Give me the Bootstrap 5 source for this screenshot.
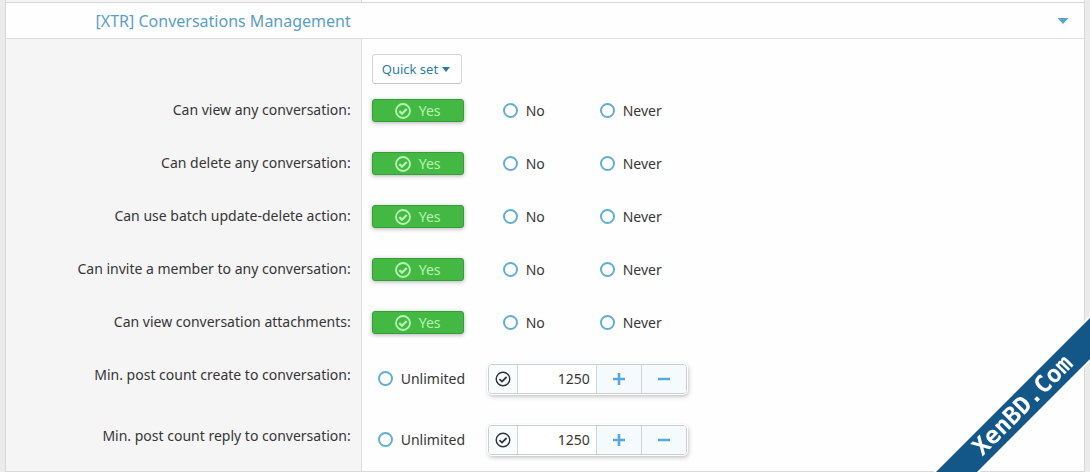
<!DOCTYPE html>
<html lang="en">
<head>
<meta charset="utf-8">
<meta name="viewport" content="width=device-width, initial-scale=1">
<title>Conversations Management permissions</title>
<link href="https://cdn.jsdelivr.net/npm/bootstrap@5.3.0/dist/css/bootstrap.min.css" rel="stylesheet">
<style>
  body { background: #ebebeb; color: #363636; font: 14px/20px "Noto Sans", sans-serif; overflow-x: hidden; }
  .panel { background: #fefefe; border: 1px solid #d8d8d8; border-top: 0; margin: 0 5px; }
  .prev-row { height: 2px; }
  .term { flex: 0 0 33%; background: #f5f5f5; border-right: 1px solid #dedede; padding-right: 10px; text-align: right; }
  .desc { padding-left: 10px; }
  .section-head { border-top: 1px solid #d8d8d8; border-bottom: 1px solid #dfdfdf; height: 37px; }
  .section-title { flex: 0 0 33%; padding-right: 11px; text-align: right; color: #5a9fc2; font-size: 16px; line-height: 24px; margin: 0; font-weight: 400; }
  .toggle-btn { width: 22px; height: 22px; margin-right: 10px; }
  .row-quick { height: 45px; }
  .row-choice { height: 53px; }
  .row-count { height: 61px; }
  .row-choice .term, .row-count .term { padding-top: 16px; }
  .row-count .desc { padding-bottom: 2px; }
  .btn-quick { --bs-btn-color: #2f7ca3; --bs-btn-bg: #fff; --bs-btn-border-color: #d3d6d8; --bs-btn-hover-color: #2f7ca3; --bs-btn-hover-bg: #f4fafd; --bs-btn-hover-border-color: #d3d6d8;
    width: 90px; height: 30px; padding: 0 9px; font-size: 13px; line-height: 20px; border-radius: 3px; border-bottom-color: #c2c5c7; }
  .choices { gap: 5px; }
  .choice { width: 92px; height: 23px; }
  .choice-plain { padding-left: 34px; }
  .choice-yes { padding-left: 22px; background: #43b943; border: 1px solid #369d39; border-radius: 3px; color: #b5f5b0; box-shadow: 0 1px 4px #0000004d; }
  .dot { appearance: none; flex: none; width: 15px; height: 15px; margin: 0; border: 2px solid #62aed0; border-radius: 50%; background: #fff; }
  .tick { appearance: none; flex: none; width: 16px; height: 16px; margin: 0; background: center / 16px 16px no-repeat; }
  .tick-light { background-image: url("data:image/svg+xml,%3Csvg xmlns='http://www.w3.org/2000/svg' viewBox='0 0 16 16' fill='none' stroke='%23b5f5b0'%3E%3Ccircle cx='8' cy='8' r='7' stroke-width='1.8'/%3E%3Cpath d='M4.3 8.2 7 10.7 11.7 6' stroke-width='2.3'/%3E%3C/svg%3E"); }
  .tick-dark { background-image: url("data:image/svg+xml,%3Csvg xmlns='http://www.w3.org/2000/svg' viewBox='0 0 16 16' fill='none' stroke='%23303438'%3E%3Ccircle cx='8' cy='8' r='6.8' stroke-width='1.4'/%3E%3Cpath d='M4.5 8.2 7 10.6 11.6 6' stroke-width='1.8'/%3E%3C/svg%3E"); }
  .unlimited { width: 116px; padding-left: 6px; }
  .stepper { width: 199px; height: 30px; border: 1px solid #c9ced0; border-radius: 4px; background: #fff; box-shadow: 0 0 0 1px #fff, 1px 2px 5px #0000004d; }
  .stepper-pick { width: 28px; background: #f8fcfd; }
  .stepper-value { width: 80px; border: 0; border-left: 1px solid #d0d5d6; border-right: 1px solid #d0d5d6; padding: 0 6px; text-align: right; color: #363636; font-size: 14px; background: #fff; }
  .stepper-btn { border: 0; padding: 0; background: #f5fbfd; }
  .stepper-btn + .stepper-btn { border-left: 1px solid #d0d5d6; }
  .ribbon-corner { position: fixed; right: 0; bottom: 0; width: 180px; height: 180px; overflow: hidden; pointer-events: none; }
  .ribbon { position: absolute; right: -53px; bottom: 52px; width: 240px; height: 29px; transform: rotate(-45deg); background: #135688; box-shadow: 0 0 0 2px #fff; color: #fff; text-align: center; font: bold 24px/29px "DejaVu Sans Mono", monospace; }
</style>
</head>
<body>
<main class="panel">
  <div class="prev-row d-flex"><div class="term"></div></div>
  <header class="section-head d-flex align-items-center">
    <h2 class="section-title">[XTR] Conversations Management</h2>
    <button type="button" class="toggle-btn btn p-0 border-0 ms-auto d-flex align-items-center justify-content-center" aria-label="Collapse section">
      <svg width="12" height="6" viewBox="0 0 12 6" aria-hidden="true"><path d="M.5 0h11L6 6z" fill="#5aa5cc"/></svg>
    </button>
  </header>
  <form id="permissions">
    <div class="row-quick d-flex">
      <div class="term"></div>
      <div class="desc d-flex align-items-end">
        <button type="button" class="btn btn-quick d-flex align-items-center gap-1">Quick set
          <svg width="8" height="5" viewBox="0 0 8 5" aria-hidden="true"><path d="M0 0h8L4 5z" fill="#2f7ca3"/></svg>
        </button>
      </div>
    </div>
  </form>
</main>

<div class="ribbon-corner"><div class="ribbon">XenBD.Com</div></div>

<script src="https://cdn.jsdelivr.net/npm/bootstrap@5.3.0/dist/js/bootstrap.bundle.min.js"></script>
<script>
  const form = document.getElementById('permissions');
  const choices = ['Can view any conversation:', 'Can delete any conversation:', 'Can use batch update-delete action:',
    'Can invite a member to any conversation:', 'Can view conversation attachments:'];
  const counts = ['Min. post count create to conversation:', 'Min. post count reply to conversation:'];

  choices.forEach((text, i) => form.insertAdjacentHTML('beforeend', `
    <div class="row-choice d-flex" role="radiogroup" aria-labelledby="choice${i}">
      <div class="term" id="choice${i}">${text}</div>
      <div class="desc choices d-flex align-items-center">
        <label class="choice choice-yes d-flex align-items-center"><input class="tick tick-light me-1" type="radio" name="p${i}" checked><span class="ps-1">Yes</span></label>
        <label class="choice choice-plain d-flex align-items-center gap-2"><input class="dot" type="radio" name="p${i}">No</label>
        <label class="choice choice-plain d-flex align-items-center gap-2"><input class="dot" type="radio" name="p${i}">Never</label>
      </div>
    </div>`));

  counts.forEach((text, i) => form.insertAdjacentHTML('beforeend', `
    <div class="row-count d-flex" role="group" aria-labelledby="count${i}">
      <label class="term" id="count${i}" for="value${i}">${text}</label>
      <div class="desc d-flex align-items-center">
        <label class="unlimited d-flex align-items-center gap-2"><input class="dot" type="radio" name="c${i}">Unlimited</label>
        <div class="stepper d-flex overflow-hidden">
          <label class="stepper-pick d-flex align-items-center justify-content-center"><input class="tick tick-dark" type="radio" name="c${i}" aria-label="Use a number" checked></label>
          <input class="stepper-value" id="value${i}" type="text" inputmode="numeric" value="1250">
          <button type="button" class="stepper-btn flex-fill d-flex align-items-center justify-content-center" aria-label="Increase"><svg width="12" height="12" viewBox="0 0 12 12"><path d="M6 0v12M0 6h12" stroke="#58a8da" stroke-width="2.6"/></svg></button>
          <button type="button" class="stepper-btn flex-fill d-flex align-items-center justify-content-center" aria-label="Decrease"><svg width="12" height="12" viewBox="0 0 12 12"><path d="M0 6h12" stroke="#58a8da" stroke-width="2.4"/></svg></button>
        </div>
      </div>
    </div>`));
</script>
</body>
</html>
